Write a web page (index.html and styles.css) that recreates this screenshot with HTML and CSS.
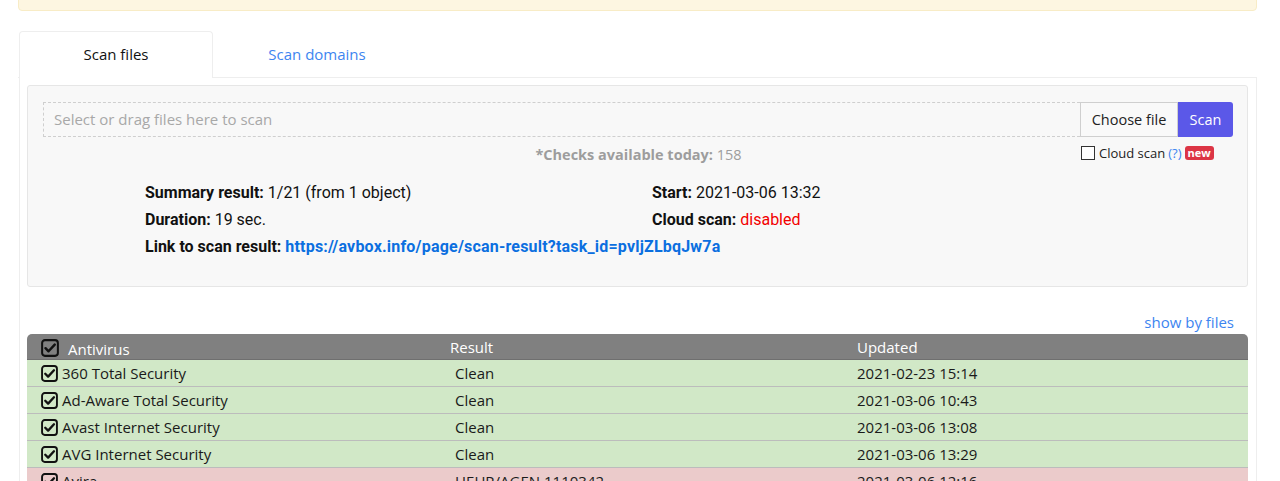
FILE: index.html
```html
<!DOCTYPE html>
<html lang="en">
<head>
    <meta charset="UTF-8">
    <title>Scan files</title>
    <link rel="stylesheet" href="styles.css">
</head>
<body>
    <!-- Notice bar (cut off at the top) -->
    <div class="notice"></div>

    <!-- Tabs -->
    <div class="tabs">
        <a class="tab active" href="#">Scan files</a>
        <a class="tab tab-domains" href="#">Scan domains</a>
    </div>

    <div class="tab-content">
        <div class="scan-box">
            <div class="upload-row">
                <div class="drop-zone">Select or drag files here to scan</div>
                <button type="button" class="choose-btn">Choose file</button>
                <button type="button" class="scan-btn">Scan</button>
            </div>
            <div class="options-row">
                <div class="checks-left"><b>*Checks available today:</b> 158</div>
                <label class="cloud-scan">
                    <span class="box"></span>
                    Cloud scan <a href="#" class="help">(?)</a>
                    <span class="badge">new</span>
                </label>
            </div>

            <div class="summary">
                <div><b>Summary result:</b> 1/21 (from 1 object)</div>
                <div><b>Start:</b> 2021-03-06 13:32</div>
                <div><b>Duration:</b> 19 sec.</div>
                <div><b>Cloud scan:</b> <span class="disabled">disabled</span></div>
                <div class="full"><b>Link to scan result:</b> <a href="#" class="result-link">https://avbox.info/page/scan-result?task_id=pvljZLbqJw7a</a></div>
            </div>
        </div>

        <div class="show-files"><a href="#">show by files</a></div>

        <div class="results">
            <div class="row head">
                <div class="cell first">
                    <svg class="check big" viewBox="0 0 16 16"><rect x="1" y="1" width="14" height="14" rx="2.5" fill="none" stroke="#111" stroke-width="1.8"/><path d="M4 8.2l2.7 2.7L12.2 5" fill="none" stroke="#111" stroke-width="2.2" stroke-linecap="round" stroke-linejoin="round"/></svg>
                    <span class="head-name">Antivirus</span>
                </div>
                <div class="cell">Result</div>
                <div class="cell">Updated</div>
            </div>
            <div class="row clean">
                <div class="cell first">
                    <svg class="check" viewBox="0 0 16 16"><rect x="1" y="1" width="14" height="14" rx="2.5" fill="none" stroke="#111" stroke-width="1.8"/><path d="M4 8.2l2.7 2.7L12.2 5" fill="none" stroke="#111" stroke-width="2.2" stroke-linecap="round" stroke-linejoin="round"/></svg>
                    360 Total Security
                </div>
                <div class="cell res">Clean</div>
                <div class="cell">2021-02-23 15:14</div>
            </div>
            <div class="row clean">
                <div class="cell first">
                    <svg class="check" viewBox="0 0 16 16"><rect x="1" y="1" width="14" height="14" rx="2.5" fill="none" stroke="#111" stroke-width="1.8"/><path d="M4 8.2l2.7 2.7L12.2 5" fill="none" stroke="#111" stroke-width="2.2" stroke-linecap="round" stroke-linejoin="round"/></svg>
                    Ad-Aware Total Security
                </div>
                <div class="cell res">Clean</div>
                <div class="cell">2021-03-06 10:43</div>
            </div>
            <div class="row clean">
                <div class="cell first">
                    <svg class="check" viewBox="0 0 16 16"><rect x="1" y="1" width="14" height="14" rx="2.5" fill="none" stroke="#111" stroke-width="1.8"/><path d="M4 8.2l2.7 2.7L12.2 5" fill="none" stroke="#111" stroke-width="2.2" stroke-linecap="round" stroke-linejoin="round"/></svg>
                    Avast Internet Security
                </div>
                <div class="cell res">Clean</div>
                <div class="cell">2021-03-06 13:08</div>
            </div>
            <div class="row clean">
                <div class="cell first">
                    <svg class="check" viewBox="0 0 16 16"><rect x="1" y="1" width="14" height="14" rx="2.5" fill="none" stroke="#111" stroke-width="1.8"/><path d="M4 8.2l2.7 2.7L12.2 5" fill="none" stroke="#111" stroke-width="2.2" stroke-linecap="round" stroke-linejoin="round"/></svg>
                    AVG Internet Security
                </div>
                <div class="cell res">Clean</div>
                <div class="cell">2021-03-06 13:29</div>
            </div>
            <div class="row infected">
                <div class="cell first">
                    <svg class="check" viewBox="0 0 16 16"><rect x="1" y="1" width="14" height="14" rx="2.5" fill="none" stroke="#111" stroke-width="1.8"/><path d="M4 8.2l2.7 2.7L12.2 5" fill="none" stroke="#111" stroke-width="2.2" stroke-linecap="round" stroke-linejoin="round"/></svg>
                    Avira
                </div>
                <div class="cell res">HEUR/AGEN.1110342</div>
                <div class="cell">2021-03-06 12:16</div>
            </div>
        </div>
    </div>
</body>
</html>
```

FILE: styles.css
```css
/* General styles */
body {
    font-family: "Open Sans", Arial, sans-serif;
    font-size: 15px;
    color: #212529;
    margin: 0;
    padding: 0 23px 0 18px;
    background-color: #fff;
}

a {
    text-decoration: none;
}

/* Yellow notice, only its bottom edge is visible */
.notice {
    height: 19px;
    margin-top: -10px;
    background-color: #fdf6e1;
    border: 1px solid #f8ecc6;
    border-radius: 4px;
}

/* Tabs */
.tabs {
    display: flex;
    margin-top: 20px;
    padding-left: 1px;
    border-bottom: 1px solid #eee;
}

.tab {
    display: block;
    height: 45px;
    line-height: 45px;
    text-align: center;
    color: #3d85f0;
    border: 1px solid transparent;
    border-bottom: none;
    border-radius: 4px 4px 0 0;
    margin-bottom: -1px;
}

.tab.active {
    width: 192px;
    color: #111;
    background-color: #fff;
    border-color: #eee;
    height: 46px;
}

.tab-domains {
    width: 206px;
}

.tab-content {
    margin-left: 1px;
    border: 1px solid #eee;
    border-top: none;
    padding: 7px 8px 0 7px;
}

/* Gray scan box */
.scan-box {
    background-color: #f8f8f8;
    border: 1px solid #e6e6e6;
    border-radius: 3px;
    padding: 16px 14px 28px 15px;
}

.upload-row {
    display: flex;
    height: 35px;
}

.drop-zone {
    flex: 1;
    border: 1px dashed #cfcfcf;
    border-right: none;
    color: #a8a8a8;
    font-size: 15px;
    line-height: 33px;
    padding-left: 10px;
}

.choose-btn {
    font-family: "Open Sans", Arial, sans-serif;
    font-size: 14.5px;
    color: #222;
    background-color: #f9f9f9;
    border: 1px solid #cfcfcf;
    padding: 0 8px;
    width: 98px;
}

.scan-btn {
    font-family: "Open Sans", Arial, sans-serif;
    font-size: 14.5px;
    color: #fff;
    background-color: #5b58e8;
    border: none;
    border-radius: 0 3px 3px 0;
    width: 55px;
}

.options-row {
    display: flex;
    align-items: flex-start;
    margin-top: 8px;
}

.checks-left {
    flex: 1;
    text-align: center;
    color: #9d9d9d;
    font-size: 14.5px;
    padding-left: 153px;
    line-height: 20px;
}

.cloud-scan {
    display: flex;
    align-items: center;
    width: 152px;
    font-size: 13px;
    color: #222;
    line-height: 16px;
}

.cloud-scan .box {
    width: 12px;
    height: 12px;
    border: 1px solid #333;
    margin: 0 4px 0 0;
    background-color: #fff;
}

.help {
    color: #3d85f0;
    margin: 0 3px 0 3px;
}

.badge {
    background-color: #dc3545;
    color: #fff;
    font-weight: bold;
    font-size: 11px;
    line-height: 14px;
    padding: 0 3px;
    border-radius: 3px;
}

/* Summary of the last scan */
.summary {
    display: grid;
    grid-template-columns: 507px 1fr;
    row-gap: 5px;
    margin-top: 17px;
    padding-left: 102px;
    font-family: Roboto, Arial, sans-serif;
    font-size: 16px;
    line-height: 22px;
    color: #111;
}

.summary .full {
    grid-column: 1 / 3;
}

.disabled {
    color: #f20000;
}

.result-link {
    color: #0b6fe0;
    font-weight: bold;
    letter-spacing: 0.2px;
}

.show-files {
    text-align: right;
    padding: 24px 14px 0 0;
    line-height: 22px;
    font-size: 15px;
}

.show-files a {
    color: #3d85f0;
}

/* Results table */
.results {
    margin-top: 1px;
}

.row {
    display: grid;
    grid-template-columns: 1fr 1fr 1fr;
    height: 26px;
    align-items: center;
    border-bottom: 1px solid #bcbcbc;
    color: #1a1a1a;
}

.row.head {
    height: 25px;
    background-color: #808080;
    color: #fff;
    border-radius: 5px 5px 0 0;
    border-bottom: 1px solid #6f6f6f;
}

.row.clean {
    background-color: #d1e8c7;
}

.row.infected {
    background-color: #ebcbcb;
}

.cell {
    padding-left: 16px;
    display: flex;
    align-items: center;
    white-space: nowrap;
}

.cell.first {
    padding-left: 14px;
}

.cell.res {
    padding-left: 21px;
}

.check {
    width: 17px;
    height: 17px;
    margin-right: 4px;
}

.check.big {
    width: 18px;
    height: 18px;
    margin-right: 9px;
    margin-top: 3px;
}

.head-name {
    margin-top: 4px;
}
```
